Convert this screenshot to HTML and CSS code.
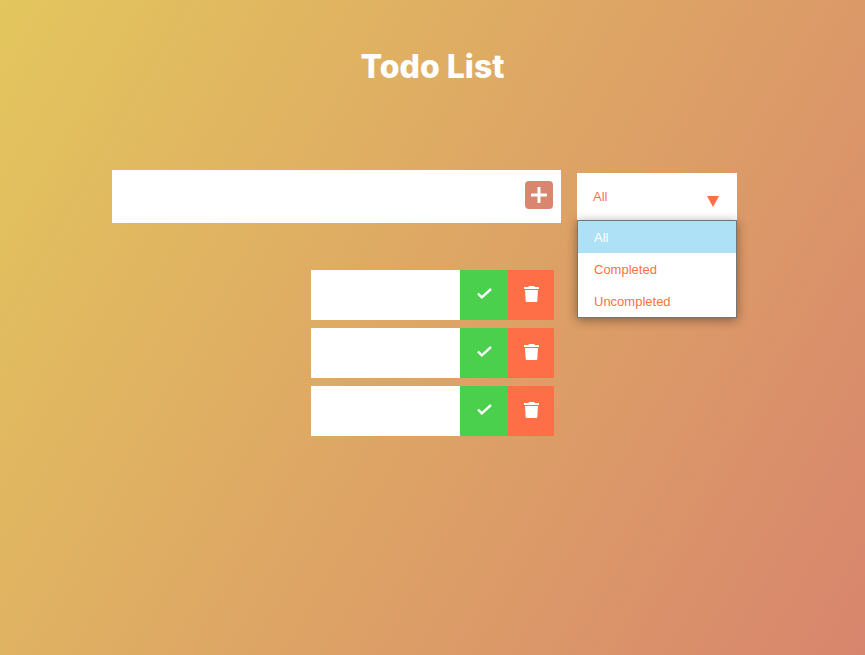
FILE: index.html
```html
<!DOCTYPE html>
<html>
<head>
    <meta charset="UTF-8">
    <title>Todo List</title>
    <link rel="stylesheet" href="styles.css">
</head>
<body>
<header class="title">
    <h1>Todo List</h1>
</header>
<form class="todo-form">
    <div class="todo-input">
        <button class="add-btn" type="button">
            <svg viewBox="0 0 16 16" width="16" height="16"><path d="M8 1v14M1 8h14" stroke="#fff" stroke-width="3" fill="none" stroke-linecap="round"/></svg>
        </button>
    </div>
    <div class="select-wrap">
        <div class="select-box">
            <span class="select-value">All</span>
            <span class="select-arrow"></span>
        </div>
        <ul class="select-menu">
            <li class="active">All</li>
            <li>Completed</li>
            <li>Uncompleted</li>
        </ul>
    </div>
</form>
<ul class="todo-list">
    <li class="todo">
        <div class="todo-text"></div>
        <button class="check-btn" type="button">
            <svg viewBox="0 0 15 11" width="15" height="11"><path d="M1 5.5l3.8 3.8L14 1" stroke="#fff" stroke-width="2.4" fill="none"/></svg>
        </button>
        <button class="trash-btn" type="button">
            <svg viewBox="0 0 15 16" width="15" height="16"><path d="M5 0h5l.7 1H15v2H0V1h4.3zM1 4h13l-.7 11a1 1 0 0 1-1 1H2.700a1 1 0 0 1-1-1z" fill="#fff"/></svg>
        </button>
    </li>
    <li class="todo">
        <div class="todo-text"></div>
        <button class="check-btn" type="button">
            <svg viewBox="0 0 15 11" width="15" height="11"><path d="M1 5.5l3.8 3.8L14 1" stroke="#fff" stroke-width="2.4" fill="none"/></svg>
        </button>
        <button class="trash-btn" type="button">
            <svg viewBox="0 0 15 16" width="15" height="16"><path d="M5 0h5l.7 1H15v2H0V1h4.3zM1 4h13l-.7 11a1 1 0 0 1-1 1H2.700a1 1 0 0 1-1-1z" fill="#fff"/></svg>
        </button>
    </li>
    <li class="todo">
        <div class="todo-text"></div>
        <button class="check-btn" type="button">
            <svg viewBox="0 0 15 11" width="15" height="11"><path d="M1 5.5l3.8 3.8L14 1" stroke="#fff" stroke-width="2.4" fill="none"/></svg>
        </button>
        <button class="trash-btn" type="button">
            <svg viewBox="0 0 15 16" width="15" height="16"><path d="M5 0h5l.7 1H15v2H0V1h4.3zM1 4h13l-.7 11a1 1 0 0 1-1 1H2.700a1 1 0 0 1-1-1z" fill="#fff"/></svg>
        </button>
    </li>
</ul>
</body>
</html>
```
FILE: styles.css
```css
* {
    margin: 0;
    padding: 0;
    box-sizing: border-box;
}

html, body {
    height: 100%;
}

body {
    background: linear-gradient(120deg, #e3c65d, #d8856d);
    font-family: "Liberation Sans", Arial, sans-serif;
    overflow: hidden;
}

.title {
    height: 170px;
    padding-top: 45px;
    text-align: center;
}

.title h1 {
    color: #fff;
    font-family: Inter, sans-serif;
    font-size: 32px;
    font-weight: 800;
    line-height: 44px;
}

.todo-form {
    display: flex;
    align-items: flex-start;
    margin-left: 112px;
}

.todo-input {
    display: flex;
    align-items: flex-start;
    justify-content: flex-end;
    width: 449px;
    height: 53px;
    padding: 11px 8px 0 0;
    background: #fff;
}

.add-btn {
    display: flex;
    align-items: center;
    justify-content: center;
    width: 28px;
    height: 28px;
    border: none;
    border-radius: 4px;
    background: #d8866f;
}

.select-wrap {
    position: relative;
    width: 160px;
    margin: 3px 0 0 16px;
}

.select-box {
    position: relative;
    height: 47px;
    padding: 16px;
    background: #fff;
    color: #ff6f5f;
    font-size: 13px;
    line-height: 15px;
}

.select-arrow {
    position: absolute;
    right: 18px;
    top: 23px;
    border-left: 6px solid transparent;
    border-right: 6px solid transparent;
    border-top: 11px solid #ff6f47;
}

.select-menu {
    position: absolute;
    left: 0;
    top: 47px;
    width: 160px;
    border: 1px solid #767676;
    background: #fff;
    box-shadow: 0 2px 10px rgba(0, 0, 0, 0.4);
    list-style: none;
}

.select-menu li {
    height: 32px;
    padding-left: 16px;
    color: #ff6f47;
    font-size: 13px;
    line-height: 34px;
}

.select-menu li.active {
    background: #aee0f6;
    color: #fff;
}

.todo-list {
    display: flex;
    flex-direction: column;
    gap: 8px;
    width: 243px;
    margin: 47px 0 0 311px;
    list-style: none;
}

.todo {
    display: flex;
    height: 50px;
}

.todo-text {
    flex: 1;
    background: #fff;
}

.check-btn, .trash-btn {
    display: flex;
    align-items: center;
    justify-content: center;
    height: 50px;
    border: none;
}

.check-btn svg {
    margin-bottom: 3px;
}

.trash-btn svg {
    margin-bottom: 2px;
}

.check-btn {
    width: 48px;
    background: #4bd04e;
}

.trash-btn {
    width: 46px;
    background: #ff6f47;
}
```
